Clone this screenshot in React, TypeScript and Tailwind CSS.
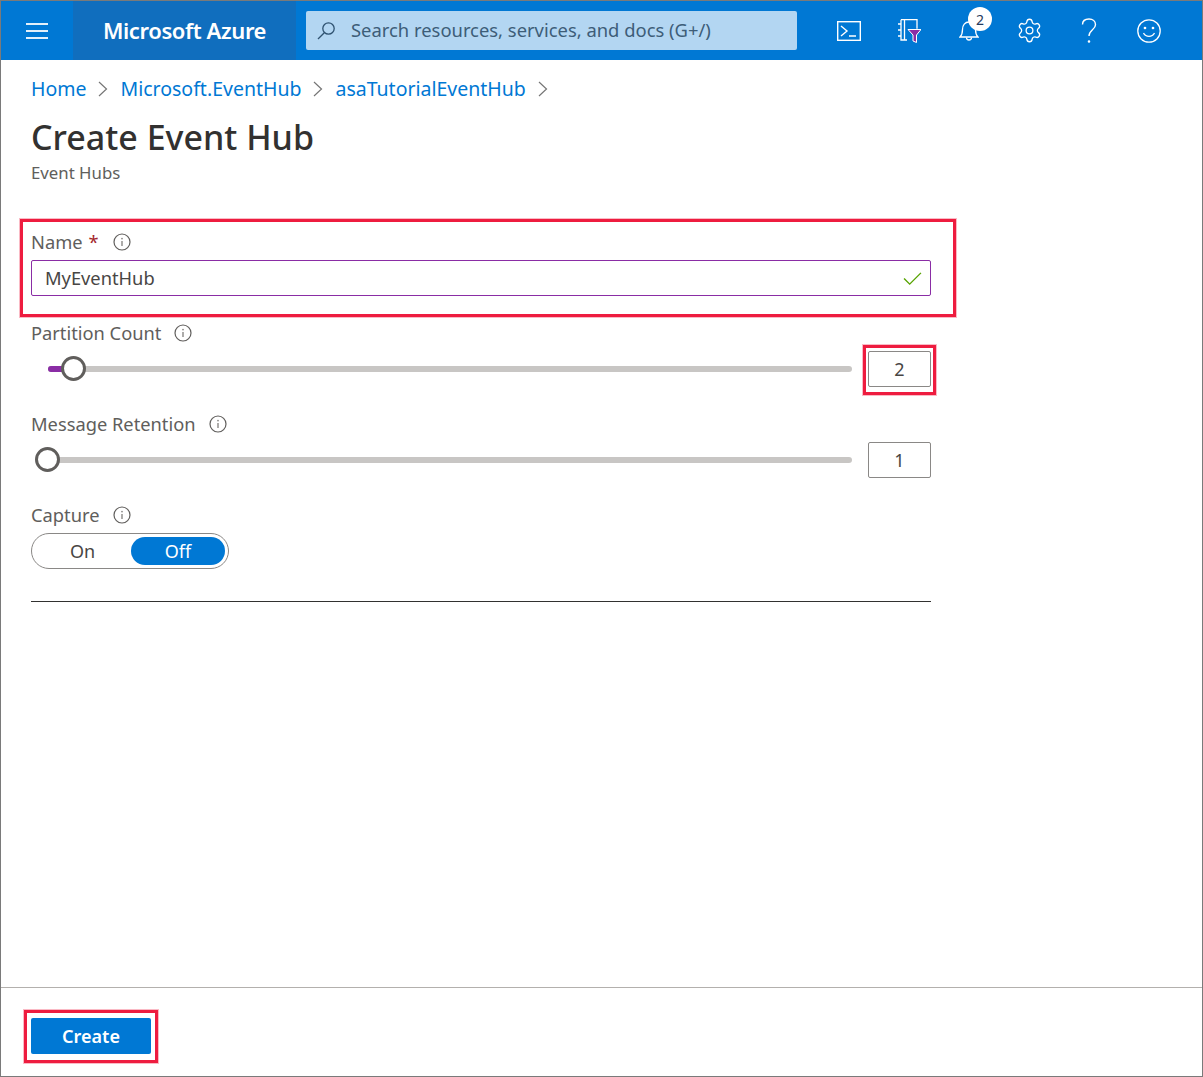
import { Settings } from "lucide-react";

const font = { fontFamily: '"Noto Sans", "Open Sans", sans-serif' };

function InfoIcon() {
  return (
    <svg width="18" height="18" viewBox="0 0 18 18" fill="none" className="shrink-0">
      <circle cx="9" cy="9" r="8" stroke="#605e5c" strokeWidth="1.2" />
      <path d="M9 8v5" stroke="#8a8886" strokeWidth="1.4" />
      <circle cx="9" cy="5.6" r="0.9" fill="#8a8886" />
    </svg>
  );
}

function FieldLabel({ text, gap, required }: { text: string; gap: string; required?: boolean }) {
  return (
    <div className="flex items-center h-6 text-[18.3px] text-[#605e5c] leading-6">
      <span>{text}</span>
      {required && <span className="ml-[6px] text-[#a4262c]">*</span>}
      <span className={gap}>
        <InfoIcon />
      </span>
    </div>
  );
}

function SliderRow({ value, thumbLeft, fill }: { value: string; thumbLeft: string; fill?: boolean }) {
  return (
    <div className="flex items-center h-9 w-[900px] pl-[17px]">
      <div className="relative flex-1 h-[6px] rounded-full bg-[#c8c6c4]">
        {fill && <div className="absolute left-0 top-0 h-[6px] w-[25px] rounded-l-full bg-[#8a2da5]" />}
        <div className={`absolute top-[-10px] h-[25px] w-[25px] rounded-full border-[3px] border-[#605e5c] bg-white ${thumbLeft}`} />
      </div>
      <div className="ml-4 flex h-9 w-[63px] items-center justify-center rounded-[2px] border border-[#8a8886] text-[18px] text-[#484644]">
        {value}
      </div>
    </div>
  );
}

function HeaderIcon({ children }: { children: React.ReactNode }) {
  return <div className="relative flex h-full w-[60px] items-center justify-center">{children}</div>;
}

function Chevron() {
  return (
    <svg width="10" height="16" viewBox="0 0 10 16" fill="none" stroke="#757575" strokeWidth="1.2" className="mx-[12px]">
      <path d="M1 1l7.500 7L1 15" />
    </svg>
  );
}

export default function App() {
  return (
    <div className="relative flex h-[1077px] w-[1203px] flex-col overflow-hidden border border-[#7a7a7a] bg-white" style={font}>
      {/* top bar */}
      <header className="flex h-[59px] items-center bg-[#0078d4] text-white">
        <div className="flex h-full w-[72px] items-center justify-center">
          <div className="flex w-[22px] flex-col gap-[5px]">
            <span className="h-[2px] bg-[#e3f0fa]" />
            <span className="h-[2px] bg-[#e3f0fa]" />
            <span className="h-[2px] bg-[#e3f0fa]" />
          </div>
        </div>
        <div className="flex h-full w-[223px] items-center bg-[#106ebe] pl-[30px] text-[22px] font-semibold tracking-[-0.4px]">
          Microsoft Azure
        </div>
        <div className="ml-[10px] flex h-[39px] w-[491px] items-center rounded-[2px] bg-[#b3d6f2] pl-[10px] text-[18.4px] text-[#3d5d78]">
          <svg width="20" height="20" viewBox="0 0 20 20" fill="none" stroke="#2f5270" strokeWidth="1.3">
            <circle cx="12.5" cy="7.5" r="5.7" />
            <path d="M8.3 11.7 2 18" />
          </svg>
          <span className="ml-[15px] leading-[37px] h-[39px]">Search resources, services, and docs (G+/)</span>
        </div>
        <div className="ml-[22px] flex h-full items-center">
          <HeaderIcon>
            <svg width="24" height="20" viewBox="0 0 24 20" fill="none" stroke="white" strokeWidth="1.4">
              <rect x="0.7" y="0.7" width="22.6" height="18.6" />
              <path d="M4 5l6 5-6 5M12 15h7" />
            </svg>
          </HeaderIcon>
          <HeaderIcon>
            <svg width="24" height="24" viewBox="0 0 24 24" fill="none">
              <path d="M4 .7h16v9M4 .7V21h6M7.500 .7V21" stroke="white" strokeWidth="1.3" />
              <path d="M1 5h3M1 11h3M1 17h3" stroke="white" strokeWidth="1.3" />
              <path d="M11 10.500H24L19.500 16v7.500l-3.500-1.500V16Z" fill="#8a2da5" stroke="white" strokeWidth="1" />
            </svg>
          </HeaderIcon>
          <HeaderIcon>
            <svg width="20" height="23" viewBox="0 0 20 23" fill="none" stroke="white" strokeWidth="1.3">
              <path d="M1 18c2-2 2.500-4 2.500-7.500C3.500 6 6 3 10 3s6.500 3 6.500 7.500c0 3.500.5 5.500 2.500 7.500Z" />
              <path d="M7.500 18.500a2.500 2.500 0 0 0 5 0" />
            </svg>
            <div className="absolute left-[29px] top-[6px] flex h-6 w-6 items-center justify-center rounded-full bg-white text-[14px] text-[#243a5e]">
              2
            </div>
          </HeaderIcon>
          <HeaderIcon>
            <Settings size={27} strokeWidth={1.15} color="white" />
          </HeaderIcon>
          <HeaderIcon>
            <svg width="16" height="26" viewBox="0 0 16 26" fill="none" stroke="white" strokeWidth="1.4">
              <path d="M1.500 6.500C1.500 3 4.300 1 8 1s6.500 2.200 6.500 5.700c0 5-6.500 5.300-6.500 11.300" />
              <circle cx="8" cy="23.500" r="0.6" fill="white" />
            </svg>
          </HeaderIcon>
          <HeaderIcon>
            <svg width="24" height="24" viewBox="0 0 24 24" fill="none" stroke="white" strokeWidth="1.3">
              <circle cx="12" cy="12" r="11.200" />
              <path d="M6.500 14c1.200 2.300 3 3.400 5.500 3.400s4.300-1.100 5.500-3.400" />
              <circle cx="8" cy="9" r="0.7" fill="white" />
              <circle cx="16" cy="9" r="0.7" fill="white" />
            </svg>
          </HeaderIcon>
        </div>
      </header>

      {/* form */}
      <main className="flex flex-1 flex-col pl-[30px]">
        <nav className="mt-[14px] flex h-[30px] items-center text-[19.5px] text-[#0078d4]">
          <span>Home</span>
          <Chevron />
          <span>Microsoft.EventHub</span>
          <Chevron />
          <span>asaTutorialEventHub</span>
          <Chevron />
        </nav>
        <h1 className="mt-[11px] h-11 text-[34px] font-medium leading-[44px] text-[#323130]">Create Event Hub</h1>
        <p className="mt-[2px] h-6 text-[16.8px] leading-6 text-[#605e5c]">Event Hubs</p>

        <div className="mt-[45px]">
          <FieldLabel text="Name" required gap="ml-[14px]" />
        </div>
        <div className="mt-[6px] flex h-9 w-[900px] items-center justify-between rounded-[2px] border border-[#8a2da5] pl-[13px] pr-[8px] text-[18.3px] text-[#484644]">
          <span>MyEventHub</span>
          <svg width="19" height="15" viewBox="0 0 20 16" fill="none" stroke="#57a300" strokeWidth="1.5">
            <path d="M1 8l6 6L19 2" />
          </svg>
        </div>

        <div className="mt-[25px]">
          <FieldLabel text="Partition Count" gap="ml-[13px]" />
        </div>
        <div className="mt-[6px]">
          <SliderRow value="2" thumbLeft="left-[13px]" fill />
        </div>

        <div className="mt-[25px]">
          <FieldLabel text="Message Retention" gap="ml-[13px]" />
        </div>
        <div className="mt-[6px]">
          <SliderRow value="1" thumbLeft="left-[-13px]" />
        </div>

        <div className="mt-[25px]">
          <FieldLabel text="Capture" gap="ml-[14px]" />
        </div>
        <div className="mt-[6px] flex h-9 w-[198px] items-center rounded-full border border-[#8a8886] pl-[3px] text-[18px]">
          <div className="flex h-7 w-[95px] items-center justify-center text-[#484644]">On</div>
          <div className="ml-[1px] flex h-7 w-[94px] items-center justify-center rounded-full bg-[#0078d4] text-white">Off</div>
        </div>
        <div className="mt-8 h-px w-[900px] bg-[#323130]" />
      </main>

      {/* footer */}
      <footer className="flex h-[89px] items-start border-t border-[#b3b0ad] pl-[30px] pt-[30px]">
        <button className="flex h-9 w-[120px] items-center justify-center rounded-[2px] bg-[#0078d4] text-[18px] font-semibold text-white">
          Create
        </button>
      </footer>

      {/* red callouts drawn over the form */}
      <div className="absolute left-[19px] top-[218px] h-[98px] w-[936px] border-[3px] border-[#ee1c3f] shadow-[0_0_0_1px_rgba(238,28,63,0.3)]" />
      <div className="absolute left-[862px] top-[344px] h-[50px] w-[73px] border-[3px] border-[#ee1c3f] shadow-[0_0_0_1px_rgba(238,28,63,0.3)]" />
      <div className="absolute left-[23px] top-[1009px] h-[53px] w-[134px] border-[3px] border-[#ee1c3f] shadow-[0_0_0_1px_rgba(238,28,63,0.3)]" />
    </div>
  );
}
